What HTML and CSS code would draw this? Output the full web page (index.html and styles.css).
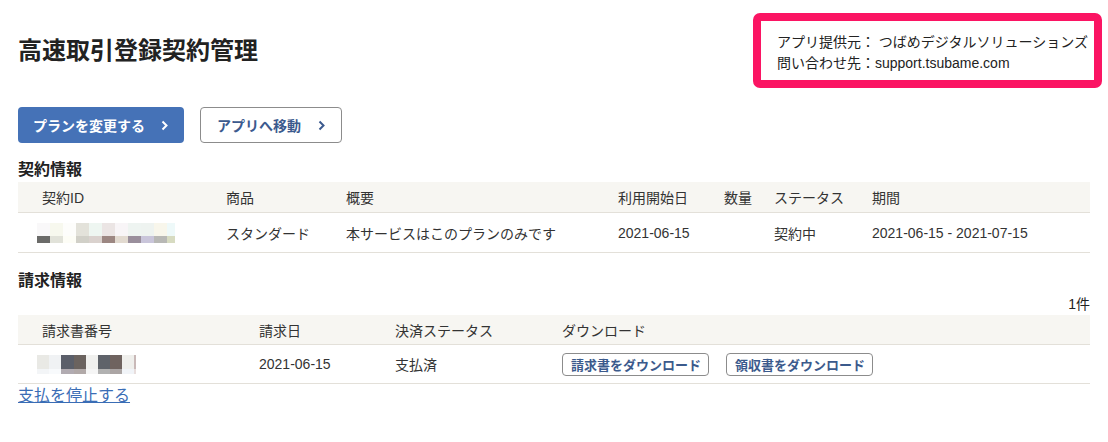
FILE: index.html
```html
<!DOCTYPE html>
<html lang="ja">
<head>
<meta charset="utf-8">
<title>高速取引登録契約管理</title>
<link rel="stylesheet" href="styles.css">
</head>
<body>
<div class="page">
  <header class="top">
    <h1 class="title">高速取引登録契約管理</h1>
    <div class="provider">
      <div>アプリ提供元： つばめデジタルソリューションズ</div>
      <div>問い合わせ先：support.tsubame.com</div>
    </div>
  </header>

  <div class="actions">
    <button class="btn btn-primary">プランを変更する<svg class="chev" width="7" height="11" viewBox="0 0 7 11"><polyline points="1.5,1.5 5.5,5.5 1.5,9.5" fill="none" stroke="currentColor" stroke-width="2"/></svg></button>
    <button class="btn btn-outline">アプリへ移動<svg class="chev" width="7" height="11" viewBox="0 0 7 11"><polyline points="1.5,1.5 5.5,5.5 1.5,9.5" fill="none" stroke="currentColor" stroke-width="2"/></svg></button>
  </div>

  <h2 class="section-title first">契約情報</h2>
  <div class="table t-contract">
    <div class="row head">
      <div>契約ID</div><div>商品</div><div>概要</div><div>利用開始日</div><div>数量</div><div>ステータス</div><div>期間</div>
    </div>
    <div class="row body">
      <div>
        <svg class="mosaic m1" width="138" height="20" viewBox="0 0 138 20">
          <rect x="0" y="0" width="13" height="13" fill="#f9f8f9"/>
          <rect x="13" y="0" width="13" height="13" fill="#f7f8ee"/>
          <rect x="26" y="0" width="13" height="13" fill="#fdfdfb"/>
          <rect x="39" y="0" width="13" height="13" fill="#e3e2da"/>
          <rect x="52" y="0" width="13" height="13" fill="#eef6f1"/>
          <rect x="65" y="0" width="13" height="13" fill="#ebe5e4"/>
          <rect x="78" y="0" width="13" height="13" fill="#f8f5f7"/>
          <rect x="91" y="0" width="13" height="13" fill="#eef4f1"/>
          <rect x="104" y="0" width="13" height="13" fill="#eef3f0"/>
          <rect x="117" y="0" width="13" height="13" fill="#f8f6eb"/>
          <rect x="130" y="0" width="8" height="13" fill="#eef9f9"/>
          <rect x="0" y="13" width="13" height="7" fill="#6b6b69"/>
          <rect x="13" y="13" width="13" height="7" fill="#e1e2d9"/>
          <rect x="26" y="13" width="13" height="7" fill="#fdfdf6"/>
          <rect x="39" y="13" width="13" height="7" fill="#d1d0c8"/>
          <rect x="52" y="13" width="13" height="7" fill="#dad2ce"/>
          <rect x="65" y="13" width="13" height="7" fill="#9c8782"/>
          <rect x="78" y="13" width="13" height="7" fill="#e2dad0"/>
          <rect x="91" y="13" width="13" height="7" fill="#9a8f9c"/>
          <rect x="104" y="13" width="13" height="7" fill="#c9c5da"/>
          <rect x="117" y="13" width="13" height="7" fill="#b8b8b5"/>
          <rect x="130" y="13" width="8" height="7" fill="#d7dbc1"/>
        </svg>
      </div>
      <div>スタンダード</div>
      <div>本サービスはこのプランのみです</div>
      <div>2021-06-15</div>
      <div></div>
      <div>契約中</div>
      <div>2021-06-15 - 2021-07-15</div>
    </div>
  </div>

  <h2 class="section-title second">請求情報</h2>
  <div class="count">1件</div>
  <div class="table t-billing">
    <div class="row head">
      <div>請求書番号</div><div>請求日</div><div>決済ステータス</div><div>ダウンロード</div>
    </div>
    <div class="row body">
      <div>
        <svg class="mosaic m2" width="99" height="19" viewBox="0 0 99 19">
          <rect x="0" y="0" width="12" height="14" fill="#e9e9e5"/>
          <rect x="12" y="0" width="12" height="14" fill="#f0f2f4"/>
          <rect x="24" y="0" width="13" height="14" fill="#5b5f6a"/>
          <rect x="37" y="0" width="12" height="14" fill="#6b635f"/>
          <rect x="49" y="0" width="12" height="14" fill="#f0f0ee"/>
          <rect x="61" y="0" width="12" height="14" fill="#5f636a"/>
          <rect x="73" y="0" width="12" height="14" fill="#6f635f"/>
          <rect x="85" y="0" width="12" height="14" fill="#efefec"/>
          <rect x="97" y="0" width="2" height="14" fill="#c9b9b8"/>
          <rect x="0" y="14" width="12" height="5" fill="#f3f5f7"/>
          <rect x="12" y="14" width="12" height="5" fill="#f8fafc"/>
          <rect x="24" y="14" width="13" height="5" fill="#b1abb1"/>
          <rect x="37" y="14" width="12" height="5" fill="#b1a9a8"/>
          <rect x="49" y="14" width="12" height="5" fill="#f5f5f5"/>
          <rect x="61" y="14" width="12" height="5" fill="#b1b1b1"/>
          <rect x="73" y="14" width="12" height="5" fill="#aba5a4"/>
          <rect x="85" y="14" width="12" height="5" fill="#f1f4f8"/>
          <rect x="97" y="14" width="2" height="5" fill="#e8dedd"/>
        </svg>
      </div>
      <div>2021-06-15</div>
      <div>支払済</div>
      <div class="downloads">
        <button class="btn-small">請求書をダウンロード</button>
        <button class="btn-small">領収書をダウンロード</button>
      </div>
    </div>
  </div>
  <a class="stop-link" href="#">支払を停止する</a>
</div>
</body>
</html>
```

FILE: styles.css
```css
* {
  box-sizing: border-box;
}

html, body {
  margin: 0;
  padding: 0;
  background: #ffffff;
}

body {
  font-family: "Liberation Sans", "Noto Sans CJK JP", sans-serif;
  font-size: 14px;
  color: #333333;
}

.page {
  padding: 0 18px;
}

.top {
  display: flex;
  justify-content: space-between;
  align-items: center;
  margin-top: 13px;
}

.title {
  margin: 0;
  font-size: 24px;
  font-weight: 700;
  line-height: 32px;
  color: #222222;
}

.provider {
  border: 8px solid #fb1463;
  border-radius: 7px;
  padding: 11px 6px 6px 16px;
  line-height: 21px;
  font-size: 14px;
  color: #222222;
  margin-right: -12px;
}

.actions {
  display: flex;
  gap: 16px;
  margin-top: 19px;
}

.btn {
  display: flex;
  align-items: center;
  height: 36px;
  border-radius: 4px;
  font-family: "Liberation Sans", "Noto Sans CJK JP", sans-serif;
  font-size: 14px;
  font-weight: 700;
  cursor: pointer;
}

.btn .chev {
  margin-left: 16px;
}

.btn-primary {
  background: #4572b7;
  color: #ffffff;
  border: none;
  padding: 0 16px 0 15px;
}

.btn-outline {
  background: #ffffff;
  color: #3c5a8e;
  border: 1px solid #8c8c8c;
  padding: 0 16px 0 16px;
}

.btn-outline .chev {
  margin-left: 17px;
}

.section-title {
  margin: 0;
  font-size: 16px;
  font-weight: 700;
  line-height: 24px;
  color: #222222;
}

.section-title.first {
  margin-top: 15px;
}

.section-title.second {
  margin-top: 16px;
}

.count {
  text-align: right;
  line-height: 20px;
  margin-top: 1px;
  margin-bottom: 1px;
  color: #222222;
}

.table .row {
  display: grid;
  align-items: center;
  padding-left: 24px;
  border-bottom: 1px solid #e3e0d9;
}

.table .head {
  background: #f7f6f2;
}

.t-contract .row {
  grid-template-columns: 184px 120px 272px 106px 50px 98px 1fr;
}

.t-contract .head {
  height: 31px;
}

.t-contract .body {
  height: 40px;
}

.t-billing .row {
  grid-template-columns: 217px 136px 167px 1fr;
}

.t-billing .head {
  height: 30px;
}

.t-billing .body {
  height: 39px;
}

.mosaic {
  display: block;
}

.m1 {
  margin-left: -5px;
}

.m2 {
  margin-left: -5px;
}

.downloads {
  display: flex;
  gap: 17px;
}

.btn-small {
  height: 23px;
  padding: 0 7px 0 8px;
  background: #ffffff;
  border: 1px solid #8c8c8c;
  border-radius: 4px;
  font-family: "Liberation Sans", "Noto Sans CJK JP", sans-serif;
  font-size: 13px;
  font-weight: 700;
  color: #3b5a8c;
  cursor: pointer;
}

.stop-link {
  display: inline-block;
  margin-top: 1px;
  font-size: 16px;
  line-height: 22px;
  color: #3a6db5;
  text-decoration: underline;
}
```
